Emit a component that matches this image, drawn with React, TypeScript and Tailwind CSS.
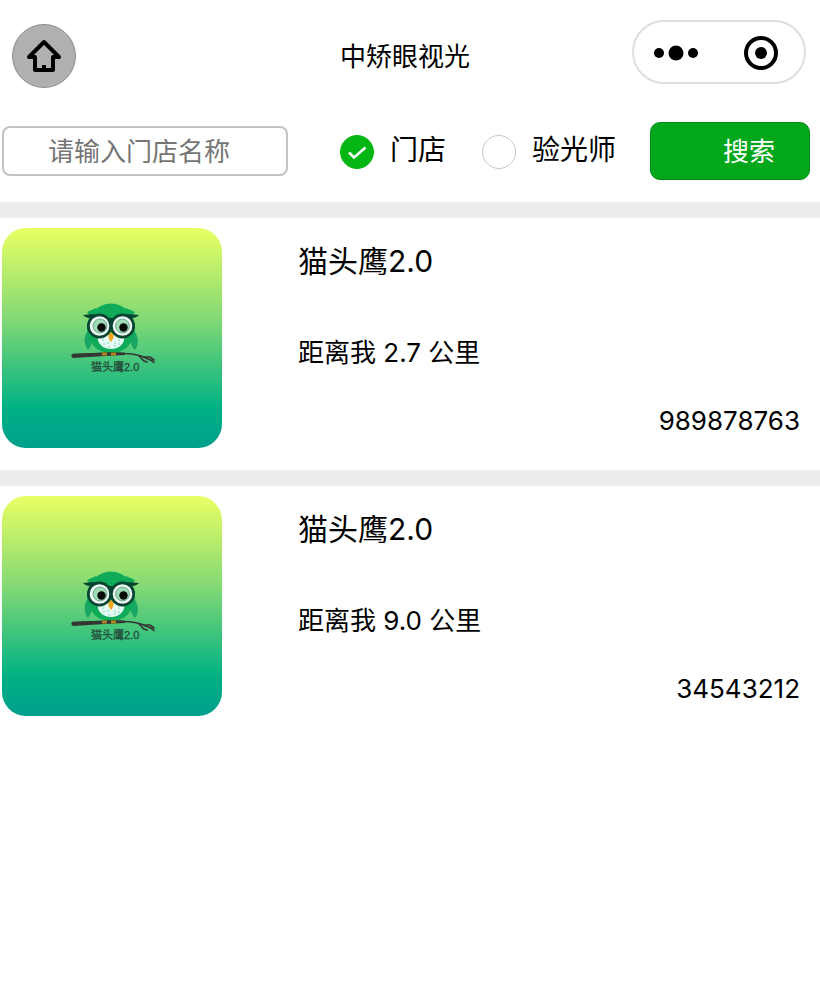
import { useState } from 'react';

type SearchKind = 'store' | 'optometrist';

interface Store {
    id: number;
    name: string;
    distance: string;
    phone: string;
}

const stores: Store[] = [
    { id: 1, name: '猫头鹰2.0', distance: '2.7', phone: '989878763' },
    { id: 2, name: '猫头鹰2.0', distance: '9.0', phone: '34543212' },
];

const kinds: { value: SearchKind; label: string }[] = [
    { value: 'store', label: '门店' },
    { value: 'optometrist', label: '验光师' },
];

function OwlLogo() {
    return (
        <svg viewBox="-3 0 100 85" className="h-[85px] w-[100px]" role="img" aria-label="猫头鹰2.0">
            {/* Body and wings */}
            <path d="M23 35c-5 5-4 14 0 19 4-4 6-14 3-20zM69 35c5 5 5 14 1 19-5-4-6-14-3-20z" fill="#1aa765" />
            <ellipse cx="46" cy="32.500" rx="24" ry="25" fill="#0fab59" />
            <path d="M22 16l9-4 3 10-8-1zM70 16l-9-4-3 10 8-1z" fill="#0fab59" />
            {/* Belly */}
            <path d="M33 39h26c2 8-5 14-13 14s-15-6-13-14z" fill="#e5faf4" />
            <path d="M37 44h2m3 3h2m5 0h2m2-3h2M38 48h2m3 3h2m4-1h2m2-2h2" stroke="#7dd7b5" strokeWidth="1" />
            {/* Glasses */}
            <path d="M18 19c7-1 18-2 24 3h8c6-5 17-4 24-3-2 2-4 3-7 3l-2 5H27l-2-5c-3 0-5-1-7-3z" fill="#074432" />
            <circle cx="34.500" cy="30" r="12.500" fill="#074432" />
            <circle cx="57.500" cy="30" r="12.500" fill="#074432" />
            <circle cx="34.500" cy="30" r="9.800" fill="#effaf6" />
            <circle cx="57.500" cy="30" r="9.800" fill="#effaf6" />
            <circle cx="35" cy="30" r="7" fill="#9fdcb6" stroke="#498d71" strokeWidth=".7" />
            <circle cx="57.500" cy="30" r="7" fill="#9fdcb6" stroke="#498d71" strokeWidth=".7" />
            <circle cx="36.500" cy="31.500" r="4.200" fill="#050908" />
            <circle cx="58.500" cy="31.500" r="4.200" fill="#050908" />
            <path d="M46 36c4 3 3 6 0 10-3-4-4-7 0-10z" fill="#f5a623" />
            {/* Branch */}
            <path d="M8 58.500c16 0 34-2 50-1 10 0 18 2 24 5 3 1 5 2 7 4M74 60l5 5 3 1M79 61l6 0 4 3" fill="none" stroke="#343633" strokeWidth="1.700" strokeLinecap="round" />
            <path d="M7 58l33-1.500h20v2.500l-20 1-32 2c-2-1-2-3-1-4z" fill="#343633" />
            <path d="M37 58h5m4 0h5" stroke="#b3841e" strokeWidth="3" />
            <text
                x="26"
                y="74.500"
                fontSize="11"
                fill="#254d3c"
                stroke="#254d3c"
                strokeWidth=".3"
                fontFamily="'Liberation Sans', 'Noto Sans CJK SC', sans-serif"
            >
                猫头鹰2.0
            </text>
        </svg>
    );
}

function StoreCard({ store }: { store: Store }) {
    return (
        <li className="flex border-t-16 border-[#ededed] pt-[10px] pr-5 pb-[22px] pl-[2px]">
            <div className="flex size-[220px] shrink-0 items-center justify-center rounded-3xl bg-[linear-gradient(#e9ff63,#86da74_40%,#00b184_82%,#009f8c)]">
                <OwlLogo />
            </div>
            <div className="ml-19 flex min-w-0 flex-1 flex-col pt-3">
                <h2 className="text-[30px] leading-[42px]">{store.name}</h2>
                <p className="mt-[51px] text-[26px] leading-10">距离我 {store.distance} 公里</p>
                <p className="mt-7 text-right text-[26px] leading-10">{store.phone}</p>
            </div>
        </li>
    );
}

export default function App() {
    const [keyword, setKeyword] = useState('');
    const [kind, setKind] = useState<SearchKind>('store');

    return (
        <div className="min-h-screen bg-white font-[Inter,'Noto_Sans_CJK_SC',sans-serif] text-black">
            <header className="grid grid-cols-[1fr_auto_1fr] items-start pt-5 pr-[14px] pl-3">
                <button
                    type="button"
                    aria-label="首页"
                    className="mt-1 flex size-16 items-center justify-center rounded-full border border-[#8f8f8f] bg-[#b0b0b0]"
                >
                    <svg viewBox="0 0 36 36" className="size-9" fill="none" stroke="black" strokeWidth="4" strokeLinecap="round" strokeLinejoin="round">
                        <path d="M9 19H3L18 4l15 15h-6v13H9z" />
                        <path d="M18 27v5" strokeLinecap="butt" />
                    </svg>
                </button>
                <h1 className="pt-4 pr-2 text-[26px] leading-[42px]">中矫眼视光</h1>
                <div className="flex h-16 w-[174px] items-center justify-between justify-self-end rounded-full border-2 border-[#dedede] pt-[2px] pr-[26px] pl-5">
                    <button type="button" aria-label="更多">
                        <svg viewBox="0 0 44 16" className="h-4 w-11">
                            <circle cx="5" cy="8" r="5" />
                            <circle cx="22" cy="8" r="7.500" />
                            <circle cx="39" cy="8" r="5" />
                        </svg>
                    </button>
                    <button type="button" aria-label="关闭">
                        <svg viewBox="0 0 34 34" className="size-[34px]">
                            <circle cx="17" cy="17" r="15" fill="none" stroke="black" strokeWidth="4" />
                            <circle cx="17" cy="17" r="6" />
                        </svg>
                    </button>
                </div>
            </header>

            <form
                className="flex items-center pt-[34px] pr-[10px] pb-[22px] pl-[2px]"
                onSubmit={(e) => e.preventDefault()}
            >
                <input
                    type="text"
                    aria-label="门店名称"
                    placeholder="请输入门店名称"
                    value={keyword}
                    onChange={(e) => setKeyword(e.target.value)}
                    className="h-[50px] min-w-0 flex-1 rounded-lg border-2 border-[#c2c2c2] pl-11 text-[26px] placeholder:text-[#757575]"
                />
                <div role="radiogroup" aria-label="搜索类型" className="ml-13 flex gap-9 pt-[2px]">
                    {kinds.map((item) => (
                        <label key={item.value} className="flex items-center gap-4 text-[28px] leading-10">
                            <span className="grid size-[34px]">
                                <input
                                    type="radio"
                                    name="kind"
                                    value={item.value}
                                    checked={kind === item.value}
                                    onChange={() => setKind(item.value)}
                                    className="peer col-start-1 row-start-1 size-[34px] appearance-none rounded-full border border-[#c8c8c8] checked:border-[#09bb07] checked:bg-[#04b613]"
                                />
                                <svg
                                    viewBox="0 0 34 34"
                                    className="pointer-events-none invisible col-start-1 row-start-1 size-[34px] peer-checked:visible"
                                    fill="none"
                                    stroke="white"
                                    strokeWidth="2.500"
                                >
                                    <path d="M9 17.500l5 5 11.500-10" />
                                </svg>
                            </span>
                            <span className="pb-1">{item.label}</span>
                        </label>
                    ))}
                </div>
                <button
                    type="submit"
                    className="ml-[34px] h-[58px] w-40 rounded-[10px] border border-[#08891a] bg-[#02a71b] pl-[38px] text-[26px] text-white"
                >
                    搜索
                </button>
            </form>

            <ul>
                {stores.map((store) => (
                    <StoreCard key={store.id} store={store} />
                ))}
            </ul>
        </div>
    );
}
